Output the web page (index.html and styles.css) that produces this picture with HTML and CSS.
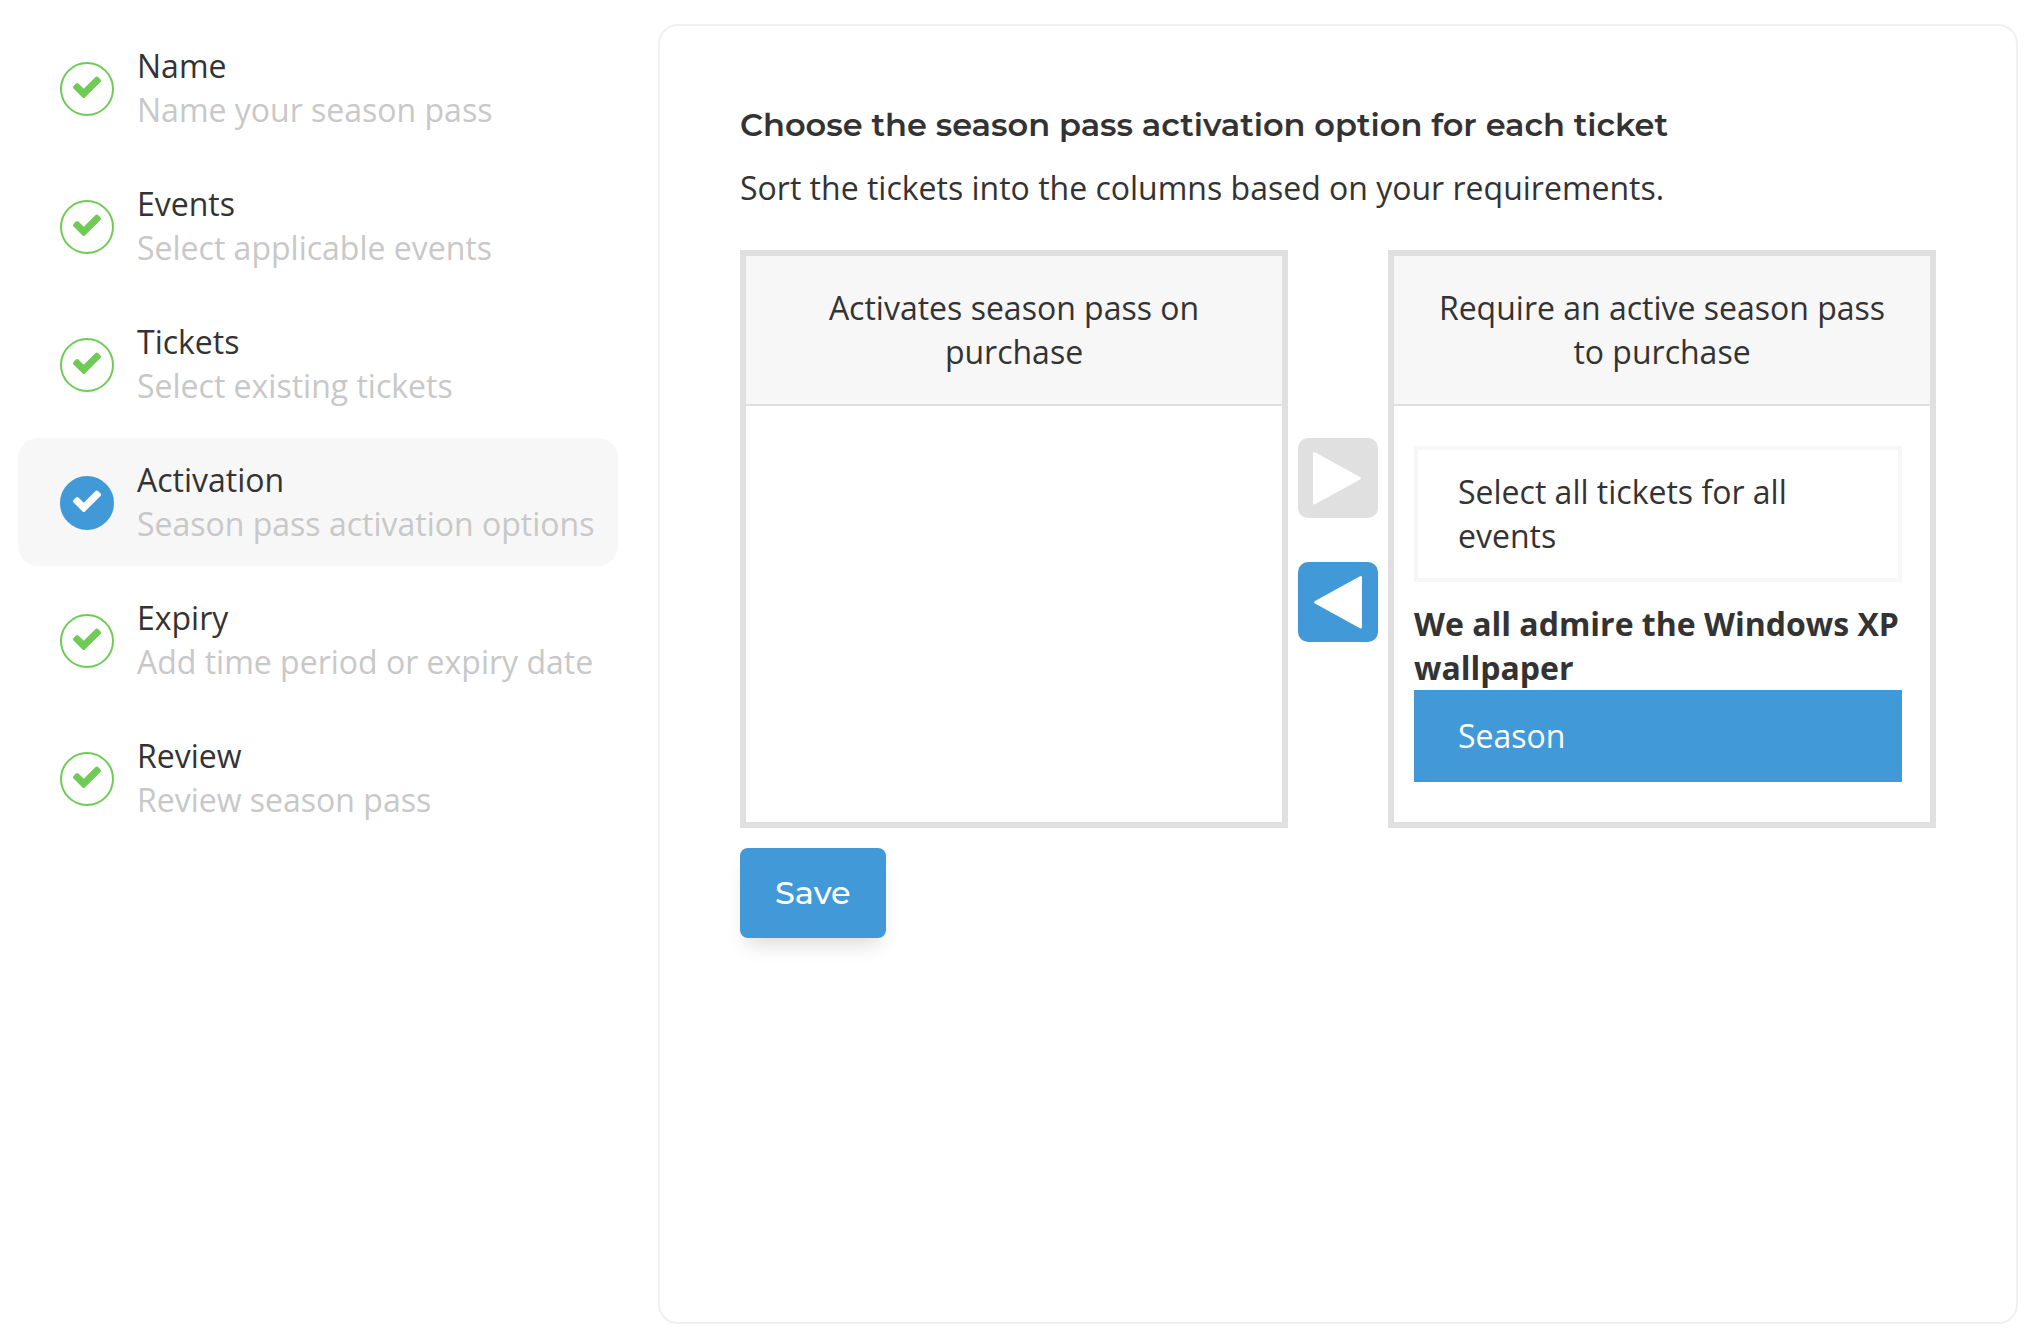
FILE: index.html
```html
<!DOCTYPE html>
<html lang="en">
<head>
<meta charset="utf-8">
<title>Season pass</title>
<link rel="stylesheet" href="styles.css">
</head>
<body>
<svg class="sprite" aria-hidden="true">
  <symbol id="check" viewBox="121 309 1550 1213">
    <path d="M1671 566q0 40-28 68l-724 724-136 136q-28 28-68 28t-68-28l-136-136-362-362q-28-28-28-68t28-68l136-136q28-28 68-28t68 28l294 295 656-657q28-28 68-28t68 28l136 136q28 28 28 68z"/>
  </symbol>
</svg>
<div class="layout">
  <nav class="steps" aria-label="Season pass steps">
    <a class="step" href="#name"><span class="badge"><svg class="tick"><use href="#check"/></svg></span><span class="label"><span>Name</span><span class="hint">Name your season pass</span></span></a>
    <a class="step" href="#events"><span class="badge"><svg class="tick"><use href="#check"/></svg></span><span class="label"><span>Events</span><span class="hint">Select applicable events</span></span></a>
    <a class="step" href="#tickets"><span class="badge"><svg class="tick"><use href="#check"/></svg></span><span class="label"><span>Tickets</span><span class="hint">Select existing tickets</span></span></a>
    <a class="step active" href="#activation" aria-current="step"><span class="badge"><svg class="tick"><use href="#check"/></svg></span><span class="label"><span>Activation</span><span class="hint">Season pass activation options</span></span></a>
    <a class="step" href="#expiry"><span class="badge"><svg class="tick"><use href="#check"/></svg></span><span class="label"><span>Expiry</span><span class="hint">Add time period or expiry date</span></span></a>
    <a class="step" href="#review"><span class="badge"><svg class="tick"><use href="#check"/></svg></span><span class="label"><span>Review</span><span class="hint">Review season pass</span></span></a>
  </nav>
  <main class="panel">
    <h1 class="title">Choose the season pass activation option for each ticket</h1>
    <p class="intro">Sort the tickets into the columns based on your requirements.</p>
    <div class="sorter">
      <section class="column">
        <h2 class="column-head">Activates season pass on purchase</h2>
        <div class="column-body"></div>
      </section>
      <div class="movers">
        <button class="mover" type="button" disabled aria-label="Move right"><svg class="arrow" viewBox="0 0 50 54"><path d="M0 2.500Q0 .3 2 1.300L47 26Q49 27.300 47 28.500L2 53.200Q0 54 0 52Z"/></svg></button>
        <button class="mover" type="button" aria-label="Move left"><svg class="arrow" viewBox="0 0 50 54"><path d="M49 2.500Q49 .3 47 1.300L2 26Q0 27.300 2 28.500L47 53.200Q49 54 49 52Z"/></svg></button>
      </div>
      <section class="column">
        <h2 class="column-head">Require an active season pass to purchase</h2>
        <div class="column-body">
          <button class="ticket" type="button">Select all tickets for all events</button>
          <h3 class="event">We all admire the Windows XP wallpaper</h3>
          <button class="ticket selected" type="button" aria-pressed="true">Season</button>
        </div>
      </section>
    </div>
    <button class="save" type="submit">Save</button>
  </main>
</div>
</body>
</html>
```
FILE: styles.css
```css
* {
  box-sizing: border-box;
}

body {
  margin: 0;
  background: #fff;
  color: #333;
  font: 32px/44px "Open Sans", "Noto Sans", sans-serif;
}

button {
  margin: 0;
  font: inherit;
  cursor: pointer;
}

.sprite {
  display: none;
}

.layout {
  display: flex;
  gap: 40px;
  min-height: 100vh;
  padding: 24px 22px 14px 18px;
}

/* Step list */
.steps {
  display: flex;
  flex: 0 0 600px;
  flex-direction: column;
  gap: 10px;
}

.step {
  display: flex;
  align-items: center;
  gap: 23px;
  padding: 20px 20px 20px 42px;
  border-radius: 20px;
  color: inherit;
  text-decoration: none;
  white-space: nowrap;
}

.step.active {
  background: #f7f7f7;
}

.badge {
  display: flex;
  flex: none;
  align-items: center;
  justify-content: center;
  width: 54px;
  height: 54px;
  margin-top: 2px;
  padding-bottom: 4px;
  border: 2px solid #6fcb55;
  border-radius: 50%;
  color: #6fcb55;
}

.active .badge {
  border-color: #4299d8;
  background: #4299d8;
  color: #fff;
}

.tick {
  width: 28px;
  height: 22px;
  fill: currentColor;
}

.label {
  display: flex;
  flex-direction: column;
}

.hint {
  color: #c8c8c8;
}

/* Main panel */
.panel {
  flex: 1;
  min-width: 0;
  padding: 80px;
  border: 2px solid #f0f0f0;
  border-radius: 20px;
}

.title {
  margin: 0 0 22px;
  font: 600 32px/38px Montserrat, Inter, sans-serif;
}

.intro {
  margin: 0 0 40px;
}

.sorter {
  display: grid;
  grid-template-columns: 1fr 80px 1fr;
  gap: 10px;
  margin-bottom: 20px;
}

.column {
  border: 6px solid #e0e0e0;
}

.column-head {
  margin: 0;
  padding: 30px 40px;
  border-bottom: 2px solid #e0e0e0;
  background: #f7f7f7;
  font: inherit;
  text-align: center;
}

.column-body {
  padding: 40px 28px 40px 20px;
}

.movers {
  display: flex;
  flex-direction: column;
  justify-content: center;
  gap: 44px;
  padding-top: 2px;
}

.mover {
  display: flex;
  align-items: center;
  justify-content: center;
  height: 80px;
  padding: 0;
  border: 0;
  border-radius: 10px;
  background: #4299d8;
}

.mover:disabled {
  background: #e0e0e0;
  cursor: default;
}

.arrow {
  width: 50px;
  height: 54px;
  fill: #fff;
}

.ticket {
  display: block;
  width: 100%;
  padding: 20px 40px;
  border: 4px solid #f7f7f7;
  background: #fff;
  color: inherit;
  text-align: left;
}

.ticket.selected {
  border-color: #4299d8;
  background: #4299d8;
  color: #fff;
}

.event {
  margin: 20px 0 0;
  font: inherit;
  font-weight: 700;
}

.save {
  padding: 25px 35px;
  border: 0;
  border-radius: 8px;
  background: #4299d8;
  box-shadow: 0 12px 20px -6px rgba(0, 0, 0, 0.15);
  color: #fff;
  font: 500 32px/40px Montserrat, Inter, sans-serif;
}
```
